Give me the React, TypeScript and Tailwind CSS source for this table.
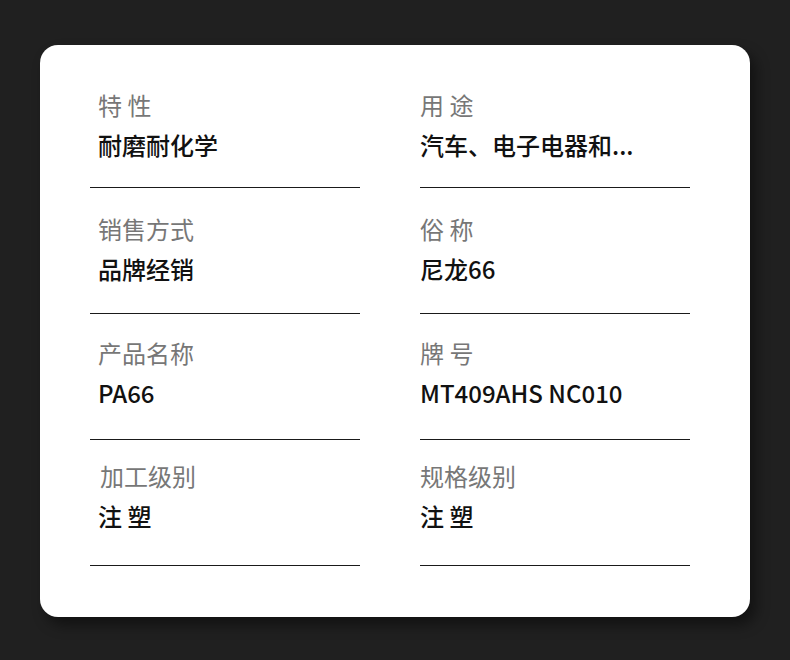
const specs = [
  { label: "特 性", value: "耐磨耐化学", labelIndent: "pl-2", valueIndent: "pl-2", top: "mt-[25px]" },
  { label: "用 途", value: "汽车、电子电器和...", labelIndent: "pl-0", valueIndent: "pl-0", top: "mt-[25px]" },
  { label: "销售方式", value: "品牌经销", labelIndent: "pl-2", valueIndent: "pl-2", top: "mt-[23px]" },
  { label: "俗 称", value: "尼龙66", labelIndent: "pl-0", valueIndent: "pl-0", top: "mt-[23px]" },
  { label: "产品名称", value: "PA66", labelIndent: "pl-2", valueIndent: "pl-2", top: "mt-[21px]" },
  { label: "牌 号", value: "MT409AHS NC010", labelIndent: "pl-0", valueIndent: "pl-0", top: "mt-[21px]" },
  { label: "加工级别", value: "注 塑", labelIndent: "pl-[10px]", valueIndent: "pl-2", top: "mt-[18px]" },
  { label: "规格级别", value: "注 塑", labelIndent: "pl-0", valueIndent: "pl-0", top: "mt-[18px]" },
]

export default function App() {
  return (
    <div
      className="w-[790px] h-[660px] bg-[#202020] pt-[45px] pl-[40px]"
      style={{ fontFamily: '"Noto Sans CJK SC", "Noto Sans", sans-serif' }}
    >
      <div className="w-[710px] h-[572px] bg-white rounded-[18px] shadow-[6px_8px_14px_rgba(0,0,0,0.45)] pt-[17px] pl-[50px] pr-[60px]">
        <div className="grid grid-cols-2 gap-x-[60px]">
          {specs.map((s, i) => (
            <div key={i} className="h-[126px] flex flex-col border-b border-[#1a1a1a]">
              <div className={`${s.top} text-[24px] leading-[36px] text-[#777] ${s.labelIndent}`}>{s.label}</div>
              <div className={`mt-[4px] text-[24px] leading-[36px] font-medium text-[#111] ${s.valueIndent}`}>{s.value}</div>
            </div>
          ))}
        </div>
      </div>
    </div>
  )
}
